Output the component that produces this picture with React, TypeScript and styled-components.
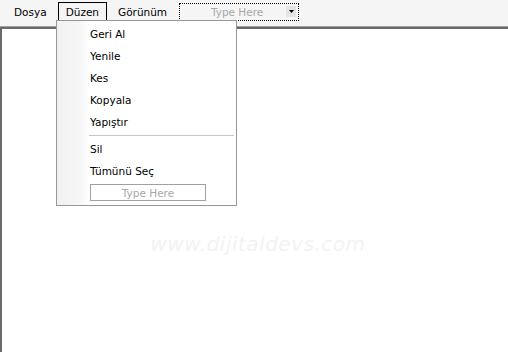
import React from 'react'
import styled, { createGlobalStyle } from 'styled-components'

const GlobalStyle = createGlobalStyle`
  html, body {
    margin: 0;
    padding: 0;
    background: #ffffff;
  }
`

const Window = styled.div`
  position: relative;
  width: 508px;
  height: 352px;
  overflow: hidden;
  display: flex;
  flex-direction: column;
  font-family: 'DejaVu Sans', Verdana, sans-serif;
  font-size: 10.5px;
  color: #000;
  background: #fff;
`

const MenuBar = styled.div`
  height: 26px;
  flex: none;
  display: flex;
  align-items: center;
  padding-left: 6px;
  gap: 3px;
  background: #f5f5f5;
  border-bottom: 1px solid #a0a0a0;
`

const MenuTitle = styled.div<{ $open?: boolean }>`
  position: relative;
  height: 17px;
  display: flex;
  align-items: center;
  padding: 0 7px;
  border: 1px solid ${p => (p.$open ? '#000' : 'transparent')};
  margin-top: -3px;
`

const Combo = styled.div`
  margin-left: 1px;
  margin-top: -3px;
  width: 116px;
  height: 16px;
  border: 1px dotted #000;
  display: flex;
  align-items: center;
  justify-content: space-between;
  padding: 0 2px 0 0;
  color: #a8a8a8;
`

const ComboText = styled.span`
  flex: 1;
  text-align: center;
  padding-left: 8px;
`

const ComboButton = styled.span`
  width: 10px;
  height: 11px;
  background: #e4e4e4;
  display: flex;
  align-items: center;
  justify-content: center;
`

const Canvas = styled.div`
  flex: 1;
  position: relative;
  border-top: 2px solid #6a6a6a;
  border-left: 2px solid #6a6a6a;
  background: #fff;
  display: flex;
  align-items: flex-start;
  justify-content: center;
`

const Watermark = styled.div`
  margin-top: 203px;
  margin-left: 6px;
  font-family: 'DejaVu Sans', sans-serif;
  font-style: italic;
  font-size: 20px;
  letter-spacing: 0.5px;
  color: #f3f3f3;
`

const Dropdown = styled.div`
  position: absolute;
  left: 56px;
  top: 20px;
  width: 179px;
  padding: 2px 0 4px;
  border: 1px solid #979797;
  background: linear-gradient(to right, #f1f1f1 0px, #f6f6f6 22px, #fdfdfd 30px, #fff 32px);
  z-index: 10;
`

const Item = styled.div`
  height: 22px;
  display: flex;
  align-items: center;
  padding-left: 33px;
`

const Separator = styled.div`
  height: 5px;
  display: flex;
  align-items: center;
  padding: 0 2px 0 32px;

  &::after {
    content: '';
    flex: 1;
    height: 1px;
    background: #c5c5c5;
  }
`

const TypeHereBox = styled.div`
  margin: 2px 0 0 33px;
  width: 114px;
  height: 15px;
  border: 1px solid #a0a0a0;
  display: flex;
  align-items: center;
  justify-content: center;
  color: #a8a8a8;
`

const editItems = ['Geri Al', 'Yenile', 'Kes', 'Kopyala', 'Yapıştır']
const selectItems = ['Sil', 'Tümünü Seç']

export default function App() {
  return (
    <>
      <GlobalStyle />
      <Window>
        <MenuBar>
          <MenuTitle>Dosya</MenuTitle>
          <MenuTitle $open>Düzen</MenuTitle>
          <MenuTitle>Görünüm</MenuTitle>
          <Combo>
            <ComboText>Type Here</ComboText>
            <ComboButton>
              <svg width="5" height="3" viewBox="0 0 5 3">
                <path d="M0 0h5L2.5 3z" fill="#000" />
              </svg>
            </ComboButton>
          </Combo>
        </MenuBar>
        <Canvas>
          <Watermark>www.dijitaldevs.com</Watermark>
        </Canvas>
        <Dropdown>
          {editItems.map(label => (
            <Item key={label}>{label}</Item>
          ))}
          <Separator />
          {selectItems.map(label => (
            <Item key={label}>{label}</Item>
          ))}
          <TypeHereBox>Type Here</TypeHereBox>
        </Dropdown>
      </Window>
    </>
  )
}
